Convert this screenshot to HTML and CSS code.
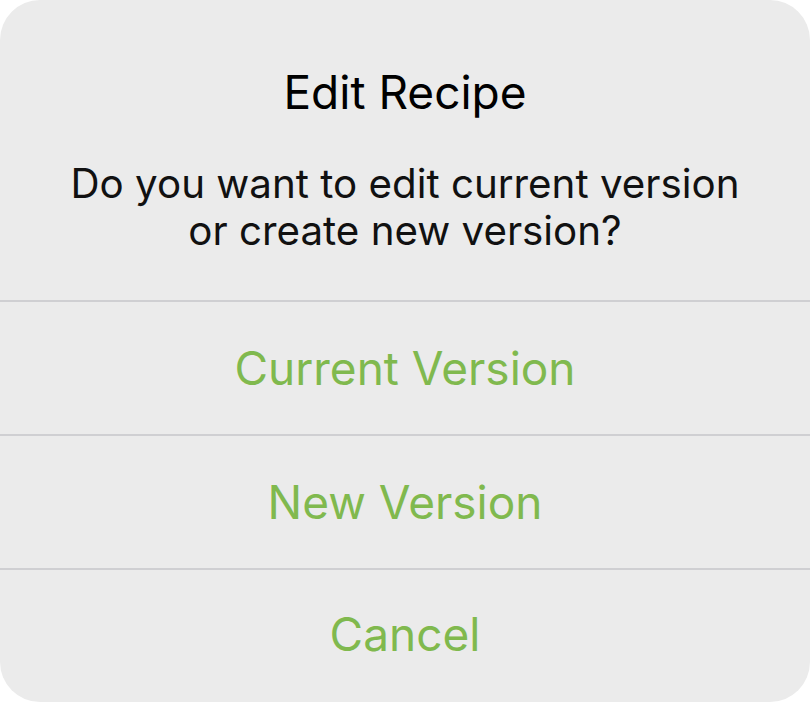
FILE: index.html
```html
<!DOCTYPE html>
<html>
<head>
<meta charset="utf-8">
<link rel="stylesheet" href="styles.css">
</head>
<body>
<div class="alert">
  <div class="header">
    <div class="title">Edit Recipe</div>
    <div class="message">Do you want to edit current version<br>or create new version?</div>
  </div>
  <div class="action">Current Version</div>
  <div class="action">New Version</div>
  <div class="action cancel">Cancel</div>
</div>
</body>
</html>
```
FILE: styles.css
```css
html, body {
  margin: 0;
  padding: 0;
  background: #ffffff;
}
.alert {
  width: 810px;
  height: 702px;
  background: #ebebeb;
  border-radius: 40px;
  display: flex;
  flex-direction: column;
  font-family: Inter, "Liberation Sans", sans-serif;
  overflow: hidden;
}
.header {
  height: 300px;
  flex: none;
  box-sizing: border-box;
  padding-top: 62px;
  text-align: center;
  color: #000;
}
.title {
  font-size: 46px;
  line-height: 60px;
}
.message {
  margin-top: 38px;
  font-size: 40.3px;
  line-height: 47px;
  color: #111;
}
.action {
  height: 134px;
  flex: none;
  box-sizing: border-box;
  display: flex;
  align-items: center;
  justify-content: center;
  border-top: 2px solid #cfcfd2;
  color: #80b94e;
  font-size: 46px;
}
.cancel {
  padding-bottom: 4px;
}
```
